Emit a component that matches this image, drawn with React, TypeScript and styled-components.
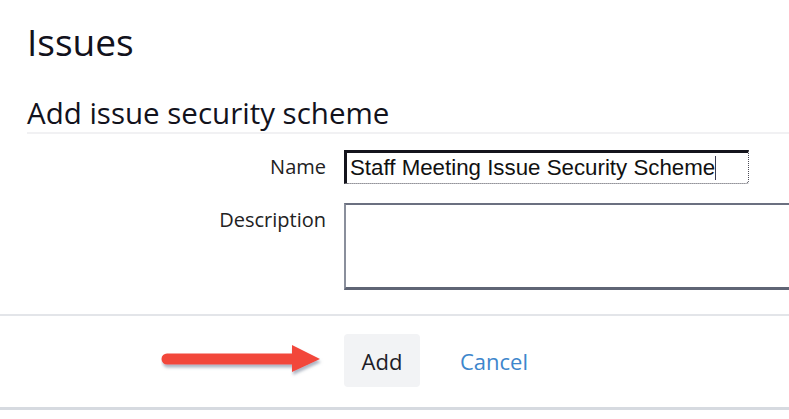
import React from "react";
import styled, { createGlobalStyle } from "styled-components";

const GlobalStyle = createGlobalStyle`
  html, body {
    margin: 0;
    padding: 0;
    background: #ffffff;
    overflow: hidden;
  }
  body {
    font-family: "Open Sans", "Noto Sans", sans-serif;
    color: #1b1b24;
  }
`;

const Page = styled.div`
  width: 789px;
  height: 419px;
  overflow: hidden;
  display: flex;
  flex-direction: column;
`;

const Header = styled.header`
  padding: 18px 0 0 27px;
`;

const Title = styled.h1`
  margin: 0;
  font-size: 37px;
  line-height: 48px;
  font-weight: 400;
  color: #12121c;
`;

const Subtitle = styled.h2`
  margin: 29px 0 0 0;
  font-size: 29.5px;
  line-height: 36px;
  font-weight: 400;
  color: #12121c;
  padding-bottom: 1px;
  border-bottom: 2px solid #f1f1f3;
`;

const Form = styled.form`
  display: flex;
  flex-direction: column;
  margin-top: 16px;
`;

const FieldRow = styled.div<{ $last?: boolean }>`
  display: grid;
  grid-template-columns: 326px 1fr;
  column-gap: 18px;
  margin-bottom: ${(p) => (p.$last ? "24px" : "19px")};
`;

const Label = styled.label`
  text-align: right;
  font-size: 20px;
  line-height: 28px;
  color: #222;
  padding-top: 3px;
`;

const TextInput = styled.div`
  box-sizing: border-box;
  width: 405px;
  height: 34px;
  border-top: 3px solid #14141c;
  border-left: 3px solid #14141c;
  border-right: 1px dotted #4a4a55;
  border-bottom: 1px dotted #4a4a55;
  border-bottom-right-radius: 3px;
  padding: 0 0 0 3px;
  font-family: "Liberation Sans", Arial, sans-serif;
  font-size: 22.3px;
  line-height: 30px;
  color: #111;
  display: flex;
  align-items: center;
  white-space: nowrap;
`;

const Caret = styled.span`
  display: inline-block;
  width: 1px;
  height: 24px;
  background: #3a3a50;
`;

const TextArea = styled.div`
  box-sizing: border-box;
  width: 480px;
  height: 87px;
  border-top: 2px solid #6b7080;
  border-left: 2px solid #8a8f9c;
  border-bottom: 3px solid #5f6575;
`;

const Divider = styled.hr<{ $thick?: boolean }>`
  margin: 0;
  border: none;
  border-top: ${(p) => (p.$thick ? "3px solid #d6dae0" : "2px solid #e3e5e9")};
  width: 100%;
`;

const ActionsRow = styled.div`
  display: grid;
  grid-template-columns: 326px 1fr;
  column-gap: 18px;
  padding: 18px 0 20px 0;
  align-items: center;
`;

const ArrowCell = styled.div`
  display: flex;
  justify-content: flex-end;
  padding-right: 1px;
`;

const Buttons = styled.div`
  display: flex;
  align-items: center;
  gap: 40px;
`;

const AddButton = styled.button`
  width: 76px;
  height: 53px;
  border: none;
  border-radius: 4px;
  background: #f2f3f5;
  font-family: "Open Sans", "Noto Sans", sans-serif;
  font-size: 22px;
  color: #1d1d28;
  padding: 0;
  cursor: pointer;
`;

const CancelLink = styled.a`
  font-size: 22px;
  color: #3d86cc;
  text-decoration: none;
`;

const Arrow = () => (
  <svg width="164" height="34" viewBox="0 0 164 34">
    <defs>
      <filter id="sh" x="-10%" y="-40%" width="130%" height="190%">
        <feDropShadow dx="1" dy="3" stdDeviation="1.5" floodColor="#6a7890" floodOpacity="0.55" />
      </filter>
    </defs>
    <g filter="url(#sh)">
      <path
        d="M6 9.5 H131 V1 L159 15 L131 28 V20.5 H6 A5.5 5.5 0 0 1 6 9.5 Z"
        fill="#f2473b"
      />
    </g>
  </svg>
);

export default function App() {
  return (
    <Page>
      <GlobalStyle />
      <Header>
        <Title>Issues</Title>
        <Subtitle>Add issue security scheme</Subtitle>
      </Header>
      <Form onSubmit={(e) => e.preventDefault()}>
        <FieldRow>
          <Label>Name</Label>
          <TextInput>
            Staff Meeting Issue Security Scheme
            <Caret />
          </TextInput>
        </FieldRow>
        <FieldRow $last>
          <Label>Description</Label>
          <TextArea />
        </FieldRow>
        <Divider />
        <ActionsRow>
          <ArrowCell>
            <Arrow />
          </ArrowCell>
          <Buttons>
            <AddButton type="submit">Add</AddButton>
            <CancelLink href="#">Cancel</CancelLink>
          </Buttons>
        </ActionsRow>
        <Divider $thick />
      </Form>
    </Page>
  );
}
